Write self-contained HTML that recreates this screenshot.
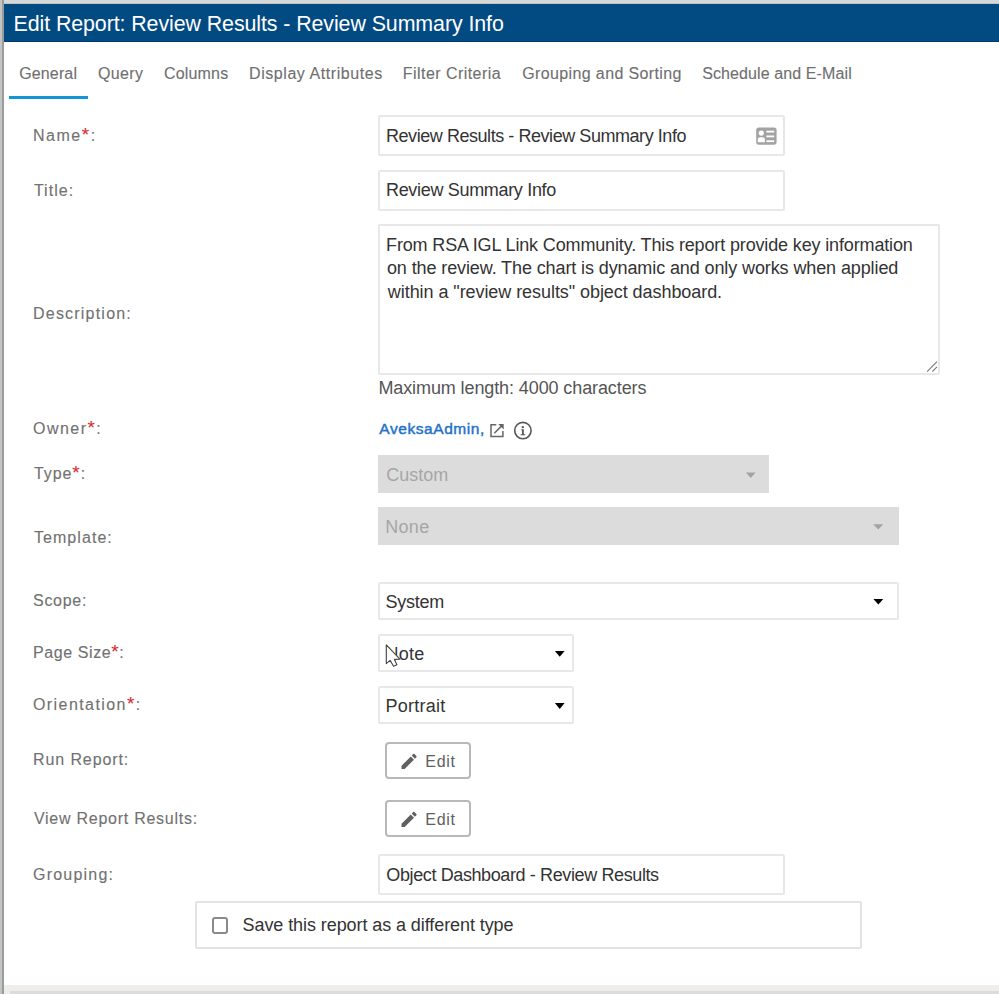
<!DOCTYPE html>
<html><head><meta charset="utf-8">
<style>
html,body{margin:0;padding:0;width:999px;height:994px;overflow:hidden;background:#fff;font-family:"Liberation Sans",sans-serif;}
#topbar{position:absolute;left:0;top:0;width:999px;height:4px;background:#d6d9d9;}
#lb1{position:absolute;left:0;top:0;width:2px;height:994px;background:#c3c5c5;}
#lb2{position:absolute;left:2px;top:0;width:2px;height:994px;background:#9a9b9b;}
#hdr{position:absolute;left:4px;top:4px;width:995px;height:38px;background:#024a82;}
.t{position:absolute;white-space:nowrap;line-height:1;}
.req{color:#ee1c26;font-size:19px;line-height:0;}
.box{position:absolute;box-sizing:border-box;border:2px solid #e8e8e8;border-radius:2px;background:#fff;}
.dis{position:absolute;background:#dcdcdc;}
.btn{position:absolute;box-sizing:border-box;border:2px solid #b8b8b8;border-radius:4px;background:#fff;}
#bot1{position:absolute;left:4px;top:985px;width:995px;height:9px;background:#efedea;}
#bot2{position:absolute;left:10px;top:991px;width:989px;height:3px;background:#dcdcdc;}
svg{position:absolute;}
</style></head><body>
<div id="topbar"></div>
<div id="hdr"></div>
<div style="position:absolute;left:4px;top:41px;width:995px;height:1px;background:#013a72;"></div>
<div style="position:absolute;left:0;top:3px;width:999px;height:1px;background:#c4c4c2;"></div>
<div id="lb1"></div><div id="lb2"></div>
<div style="position:absolute;left:9px;top:96px;width:79px;height:3px;background:#1196d6;"></div>

<div class="box" style="left:378px;top:115px;width:407px;height:41px;"></div>
<div class="box" style="left:378px;top:170px;width:407px;height:41px;"></div>
<div class="box" style="left:378px;top:224px;width:562px;height:151px;"></div>
<div class="dis" style="left:378px;top:455px;width:391px;height:38px;"></div>
<div class="dis" style="left:378px;top:507px;width:521px;height:38px;"></div>
<div class="box" style="left:378px;top:582px;width:521px;height:38px;"></div>
<div class="box" style="left:378px;top:634px;width:196px;height:38px;"></div>
<div class="box" style="left:378px;top:686px;width:196px;height:38px;"></div>
<div class="btn" style="left:385px;top:741.5px;width:85.5px;height:37px;"></div>
<div class="btn" style="left:385px;top:799.5px;width:85.5px;height:37px;"></div>
<div class="box" style="left:378px;top:854px;width:407px;height:41px;"></div>
<div class="box" style="left:195px;top:901px;width:667px;height:48px;border-color:#e3e3e3;"></div>
<div style="position:absolute;box-sizing:border-box;left:212px;top:917px;width:16px;height:16.5px;border:2px solid #8a8a8a;border-radius:3px;"></div>

<div class="t" style="left:13.52px;top:13.94px;font-size:21.4px;color:#fff;font-weight:400;letter-spacing:-0.088px;">Edit Report: Review Results - Review Summary Info</div>
<div class="t" style="left:19.16px;top:65.64px;font-size:16px;color:#6f6f6f;font-weight:400;letter-spacing:0.150px;-webkit-text-stroke:0.12px #6f6f6f;">General</div>
<div class="t" style="left:97.92px;top:65.64px;font-size:16px;color:#6f6f6f;font-weight:400;letter-spacing:0.394px;-webkit-text-stroke:0.12px #6f6f6f;">Query</div>
<div class="t" style="left:163.92px;top:65.64px;font-size:16px;color:#6f6f6f;font-weight:400;letter-spacing:0.188px;-webkit-text-stroke:0.12px #6f6f6f;">Columns</div>
<div class="t" style="left:249.05px;top:65.64px;font-size:16px;color:#6f6f6f;font-weight:400;letter-spacing:0.561px;-webkit-text-stroke:0.12px #6f6f6f;">Display Attributes</div>
<div class="t" style="left:402.79px;top:65.64px;font-size:16px;color:#6f6f6f;font-weight:400;letter-spacing:0.450px;-webkit-text-stroke:0.12px #6f6f6f;">Filter Criteria</div>
<div class="t" style="left:522.32px;top:65.64px;font-size:16px;color:#6f6f6f;font-weight:400;letter-spacing:0.365px;-webkit-text-stroke:0.12px #6f6f6f;">Grouping and Sorting</div>
<div class="t" style="left:702.16px;top:65.64px;font-size:16px;color:#6f6f6f;font-weight:400;letter-spacing:0.105px;-webkit-text-stroke:0.12px #6f6f6f;">Schedule and E-Mail</div>
<div class="t" style="left:33.00px;top:127.89px;font-size:16px;color:#717171;font-weight:400;letter-spacing:1.512px;-webkit-text-stroke:0.12px #717171;">Name<span class="req">*</span>:</div>
<div class="t" style="left:33.90px;top:182.85px;font-size:16px;color:#717171;font-weight:400;letter-spacing:1.044px;-webkit-text-stroke:0.12px #717171;">Title:</div>
<div class="t" style="left:33.00px;top:305.53px;font-size:16px;color:#717171;font-weight:400;letter-spacing:1.211px;-webkit-text-stroke:0.12px #717171;">Description:</div>
<div class="t" style="left:33.00px;top:420.89px;font-size:16px;color:#717171;font-weight:400;letter-spacing:1.470px;-webkit-text-stroke:0.12px #717171;">Owner<span class="req">*</span>:</div>
<div class="t" style="left:33.90px;top:466.37px;font-size:16px;color:#717171;font-weight:400;letter-spacing:0.938px;-webkit-text-stroke:0.12px #717171;">Type<span class="req">*</span>:</div>
<div class="t" style="left:33.90px;top:529.85px;font-size:16px;color:#717171;font-weight:400;letter-spacing:1.069px;-webkit-text-stroke:0.12px #717171;">Template:</div>
<div class="t" style="left:33.00px;top:592.90px;font-size:16px;color:#717171;font-weight:400;letter-spacing:0.720px;-webkit-text-stroke:0.12px #717171;">Scope:</div>
<div class="t" style="left:33.00px;top:644.91px;font-size:16px;color:#717171;font-weight:400;letter-spacing:0.594px;-webkit-text-stroke:0.12px #717171;">Page Size<span class="req">*</span>:</div>
<div class="t" style="left:33.00px;top:696.91px;font-size:16px;color:#717171;font-weight:400;letter-spacing:1.425px;-webkit-text-stroke:0.12px #717171;">Orientation<span class="req">*</span>:</div>
<div class="t" style="left:33.00px;top:751.74px;font-size:16px;color:#717171;font-weight:400;letter-spacing:0.900px;-webkit-text-stroke:0.12px #717171;">Run Report:</div>
<div class="t" style="left:33.90px;top:810.53px;font-size:16px;color:#717171;font-weight:400;letter-spacing:0.748px;-webkit-text-stroke:0.12px #717171;">View Report Results:</div>
<div class="t" style="left:33.00px;top:866.53px;font-size:16px;color:#717171;font-weight:400;letter-spacing:1.215px;-webkit-text-stroke:0.12px #717171;">Grouping:</div>
<div class="t" style="left:386.00px;top:126.71px;font-size:18px;color:#333;font-weight:400;letter-spacing:-0.447px;">Review Results - Review Summary Info</div>
<div class="t" style="left:386.00px;top:180.92px;font-size:18px;color:#333;font-weight:400;letter-spacing:-0.320px;">Review Summary Info</div>
<div class="t" style="left:386.05px;top:235.50px;font-size:18px;color:#333;font-weight:400;letter-spacing:-0.144px;">From RSA IGL Link Community. This report provide key information</div>
<div class="t" style="left:386.95px;top:259.34px;font-size:18px;color:#333;font-weight:400;letter-spacing:-0.106px;">on the review. The chart is dynamic and only works when applied</div>
<div class="t" style="left:387.85px;top:283.18px;font-size:18px;color:#333;font-weight:400;letter-spacing:-0.064px;">within a "review results" object dashboard.</div>
<div class="t" style="left:378.42px;top:378.92px;font-size:18px;color:#555;font-weight:400;letter-spacing:-0.102px;">Maximum length: 4000 characters</div>
<div class="t" style="left:379.32px;top:421.45px;font-size:15.5px;color:#1f72c6;font-weight:400;letter-spacing:0.562px;-webkit-text-stroke:0.45px #1f72c6;">AveksaAdmin,</div>
<div class="t" style="left:386.16px;top:465.68px;font-size:18px;color:#a6a6a6;font-weight:400;letter-spacing:0.036px;">Custom</div>
<div class="t" style="left:385.26px;top:517.68px;font-size:18px;color:#a6a6a6;font-weight:400;letter-spacing:0.300px;">None</div>
<div class="t" style="left:385.58px;top:592.92px;font-size:18px;color:#333;font-weight:400;letter-spacing:-0.288px;">System</div>
<div class="t" style="left:385.58px;top:644.50px;font-size:18px;color:#333;font-weight:400;letter-spacing:0.240px;">Note</div>
<div class="t" style="left:385.58px;top:696.71px;font-size:18px;color:#333;font-weight:400;letter-spacing:0.219px;">Portrait</div>
<div class="t" style="left:425.37px;top:753.82px;font-size:16px;color:#606060;font-weight:400;letter-spacing:0.690px;">Edit</div>
<div class="t" style="left:425.37px;top:811.98px;font-size:16px;color:#606060;font-weight:400;letter-spacing:0.690px;">Edit</div>
<div class="t" style="left:386.32px;top:865.71px;font-size:18px;color:#333;font-weight:400;letter-spacing:-0.385px;">Object Dashboard - Review Results</div>
<div class="t" style="left:242.58px;top:916.18px;font-size:18px;color:#333;font-weight:400;letter-spacing:-0.082px;">Save this report as a different type</div>

<!-- name card icon -->
<svg style="left:0;top:0" width="999" height="994" viewBox="0 0 999 994">
<g>
<rect x="756.2" y="127.6" width="20.4" height="17.1" rx="2.6" fill="#a3a3a3"/>
<circle cx="761.3" cy="133.1" r="2.6" fill="#fff"/>
<path d="M757.8,142.2 L757.8,139.6 Q757.8,137.3 760.2,137.3 L762.5,137.3 Q764.9,137.3 764.9,139.6 L764.9,142.2 Z" fill="#fff"/>
<rect x="766.4" y="130.7" width="7.8" height="1.8" fill="#fff"/>
<rect x="766.4" y="135.5" width="7.8" height="1.8" fill="#fff"/>
<rect x="766.4" y="140.3" width="7.8" height="1.8" fill="#fff"/>
</g>
<!-- external link -->
<g fill="none" stroke="#666" stroke-width="1.5">
<path d="M496.3,424.8 L491,424.8 L491,436.4 L502.9,436.4 L502.9,431"/>
<path d="M494.3,433.2 L502.4,425.1"/>
</g>
<path d="M498.2,424 L503.7,424 L503.7,429.5 Z" fill="#666"/>
<!-- info -->
<circle cx="522.9" cy="430.6" r="8.2" fill="none" stroke="#555" stroke-width="1.6"/>
<circle cx="522.8" cy="427.1" r="1.2" fill="#555"/>
<path d="M521.2,429.2 L523.8,429.2 L523.8,434.2 L525.2,434.2 L525.2,435.2 L520.6,435.2 L520.6,434.2 L522,434.2 L522,430.2 L521.2,430.2 Z" fill="#555"/>
<!-- select arrows -->
<path d="M745.9,472.5 L755.6,472.5 L750.75,477.9 Z" fill="#a3a3a3"/>
<path d="M873.2,524.2 L883.2,524.2 L878.2,529.6 Z" fill="#a3a3a3"/>
<path d="M873.4,599 L883.3,599 L878.35,604.4 Z" fill="#000"/>
<path d="M554.9,651 L564.6,651 L559.75,656.8 Z" fill="#000"/>
<path d="M554.9,703 L564.6,703 L559.75,709 Z" fill="#000"/>
<!-- resize handle -->
<g stroke="#777" stroke-width="1.1">
<path d="M927.1,371.6 L937,361.7"/>
<path d="M932.3,371.6 L937,366.9"/>
</g>
<!-- pencils -->
<path transform="translate(399.0,751.3) scale(0.84)" d="M3 17.25V21h3.75L17.81 9.94l-3.75-3.75L3 17.25z M20.71 7.04c.39-.39.39-1.02 0-1.41l-2.34-2.34c-.39-.39-1.02-.39-1.41 0l-1.83 1.83 3.75 3.75 1.83-1.83z" fill="#606060"/>
<path transform="translate(399.0,809.3) scale(0.84)" d="M3 17.25V21h3.75L17.81 9.94l-3.75-3.75L3 17.25z M20.71 7.04c.39-.39.39-1.02 0-1.41l-2.34-2.34c-.39-.39-1.02-.39-1.41 0l-1.83 1.83 3.75 3.75 1.83-1.83z" fill="#606060"/>
</svg>

<svg style="left:0;top:0" width="999" height="994" viewBox="0 0 999 994">
<path d="M386.3,644.8 L386.3,663.6 L390.1,660.4 L393.6,666.2 L396.9,664.8 L394.4,659.4 L399.9,659.2 Z" fill="#fff" stroke="#4a4a4a" stroke-width="1.15" stroke-linejoin="round"/>
</svg>


<div id="bot1"></div><div id="bot2"></div>
</body></html>
